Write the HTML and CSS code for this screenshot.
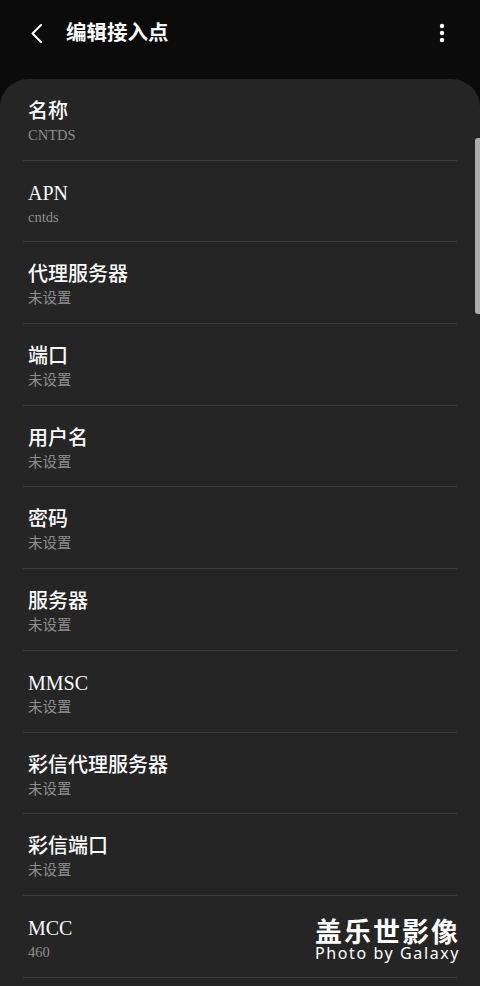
FILE: index.html
```html
<!DOCTYPE html>
<html lang="zh">
<head>
<meta charset="utf-8">
<link rel="stylesheet" href="styles.css">
</head>
<body>
<header class="topbar">
  <svg class="back" width="24" height="24" viewBox="0 0 24 24"><path d="M16 4 L7.5 12.5 L16 21" fill="none" stroke="#fff" stroke-width="2" stroke-linecap="round" stroke-linejoin="round"/></svg>
  <h1 class="title">编辑接入点</h1>
  <svg class="more" width="10" height="24" viewBox="0 0 10 24"><circle cx="5" cy="5" r="2.2" fill="#fff"/><circle cx="5" cy="12" r="2.2" fill="#fff"/><circle cx="5" cy="19" r="2.2" fill="#fff"/></svg>
</header>
<main class="card">
  <div class="row"><div class="label">名称</div><div class="value">CNTDS</div></div>
  <div class="row"><div class="label">APN</div><div class="value">cntds</div></div>
  <div class="row"><div class="label">代理服务器</div><div class="value">未设置</div></div>
  <div class="row"><div class="label">端口</div><div class="value">未设置</div></div>
  <div class="row"><div class="label">用户名</div><div class="value">未设置</div></div>
  <div class="row"><div class="label">密码</div><div class="value">未设置</div></div>
  <div class="row"><div class="label">服务器</div><div class="value">未设置</div></div>
  <div class="row"><div class="label">MMSC</div><div class="value">未设置</div></div>
  <div class="row"><div class="label">彩信代理服务器</div><div class="value">未设置</div></div>
  <div class="row"><div class="label">彩信端口</div><div class="value">未设置</div></div>
  <div class="row"><div class="label">MCC</div><div class="value">460</div></div>
</main>
<div class="scrollbar"></div>
<div class="watermark">
  <div class="wm-cn">盖乐世影像</div>
  <div class="wm-en">Photo by Galaxy</div>
</div>
</body>
</html>
```
FILE: styles.css
```css
html, body {
  margin: 0;
  padding: 0;
  background: #0b0b0b;
  height: 986px;
  overflow: hidden;
}
body {
  font-family: "Liberation Serif", "Noto Sans CJK SC", serif;
  color: #fff;
  position: relative;
}
.topbar {
  height: 79px;
  display: flex;
  align-items: flex-start;
  padding: 21px 33px 0 25px;
  box-sizing: border-box;
}
.back {
  flex: none;
}
.title {
  margin: 0 0 0 17px;
  font-size: 20.5px;
  line-height: 24px;
  font-weight: 700;
  flex: 1;
}
.more {
  flex: none;
}
.card {
  background: #252525;
  border-radius: 28px 28px 0 0;
  height: 907px;
  overflow: hidden;
}
.row {
  margin: 0 23px;
  padding: 20px 0 0 5px;
  height: 81.7px;
  box-sizing: border-box;
  border-bottom: 1px solid #3d3d3d;
}
.label {
  font-size: 20px;
  line-height: 24px;
  font-weight: 500;
  color: #fafafa;
}
.value {
  margin-top: 2px;
  font-size: 14.5px;
  line-height: 20px;
  color: #8e8e8e;
}
.scrollbar {
  position: absolute;
  right: 0;
  top: 138px;
  width: 5px;
  height: 176px;
  background: #adadad;
  border-radius: 3px 0 0 3px;
}
.watermark {
  position: absolute;
  left: 315px;
  top: 917px;
  width: 150px;
  color: #fff;
}
.wm-cn {
  font-family: "Noto Sans CJK SC", sans-serif;
  font-weight: 700;
  font-size: 27px;
  line-height: 28px;
  letter-spacing: 2px;
}
.wm-en {
  font-family: "Noto Sans", sans-serif;
  font-size: 16px;
  line-height: 16px;
  letter-spacing: 1.6px;
  white-space: nowrap;
}
```
